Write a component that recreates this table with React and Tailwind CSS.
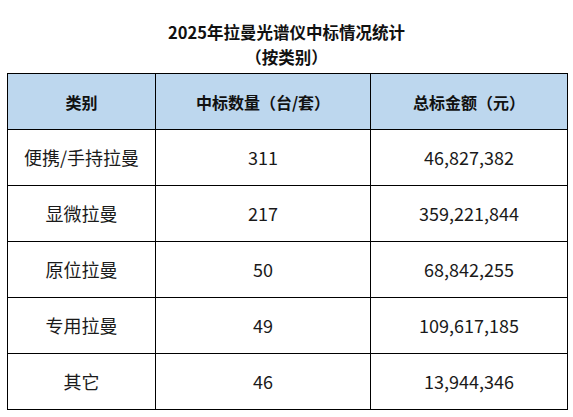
export default function App() {
  const rows = [
    ["便携/手持拉曼", "311", "46,827,382"],
    ["显微拉曼", "217", "359,221,844"],
    ["原位拉曼", "50", "68,842,255"],
    ["专用拉曼", "49", "109,617,185"],
    ["其它", "46", "13,944,346"],
  ];
  return (
    <div
      className="w-[573px] h-[417px] bg-white text-[#111]"
      style={{ fontFamily: '"Noto Sans CJK SC", "Noto Sans", sans-serif' }}
    >
      <div className="pt-[20px] pb-[3px] flex flex-col items-center font-bold text-[16.5px] leading-[25px]">
        <div>2025年拉曼光谱仪中标情况统计</div>
        <div>（按类别）</div>
      </div>
      <div className="pl-[7px]">
        <table className="border-collapse w-[560px] table-fixed">
          <colgroup>
            <col className="w-[148px]" />
            <col className="w-[215px]" />
            <col className="w-[197px]" />
          </colgroup>
          <thead>
            <tr className="h-[56px] bg-[#bdd7ee]">
              <th className="border-[1.5px] border-black text-[16px] font-bold text-center">类别</th>
              <th className="border-[1.5px] border-black text-[16px] font-bold text-center">中标数量（台/套）</th>
              <th className="border-[1.5px] border-black text-[16px] font-bold text-center">总标金额（元）</th>
            </tr>
          </thead>
          <tbody>
            {rows.map((r) => (
              <tr key={r[0]} className="h-[56px]">
                {r.map((c, i) => (
                  <td key={i} className="border-[1.5px] border-black text-[18px] text-center font-normal text-[#1a1a1a]">
                    {c}
                  </td>
                ))}
              </tr>
            ))}
          </tbody>
        </table>
      </div>
    </div>
  );
}
